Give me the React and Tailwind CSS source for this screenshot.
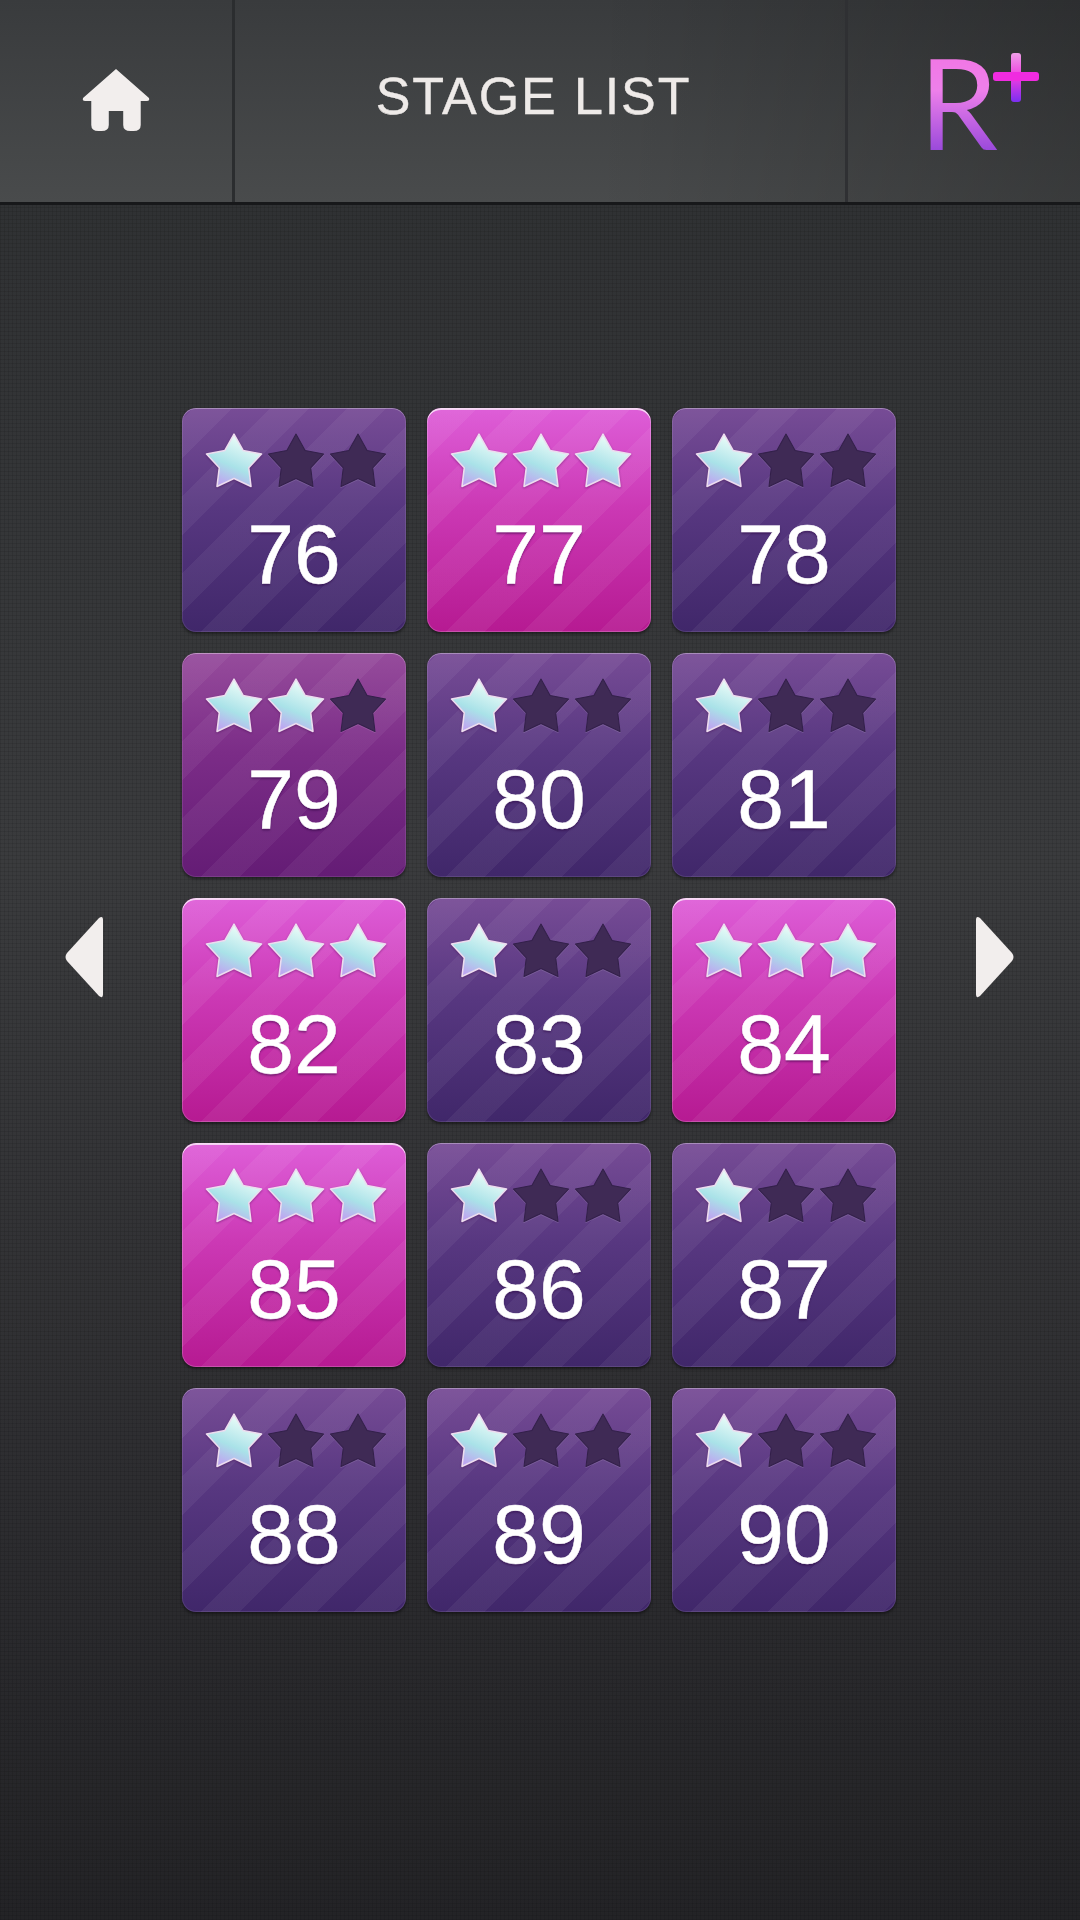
const starPoints = Array.from({ length: 10 }, (_, i) => {
  const r = i % 2 === 0 ? 28 : 15
  const a = (Math.PI / 5) * i - Math.PI / 2
  return `${(30 + r * Math.cos(a)).toFixed(2)},${(31 + r * Math.sin(a)).toFixed(2)}`
}).join(' ')

const tones = {
  dim: 'bg-[image:repeating-linear-gradient(135deg,transparent_0_8px,rgba(255,255,255,.05)_8px_36px,transparent_36px_54.4px),linear-gradient(180deg,#774c96_0%,#573780_45%,#40276a_100%)] shadow-[inset_0_1px_0_rgba(255,255,255,.25),inset_0_0_0_1px_rgba(255,255,255,.1),0_2px_3px_rgba(0,0,0,.45)]',
  mid: 'bg-[image:repeating-linear-gradient(135deg,transparent_0_8px,rgba(255,255,255,.05)_8px_36px,transparent_36px_54.4px),linear-gradient(180deg,#964c9c_0%,#7b2c87_45%,#641c75_100%)] shadow-[inset_0_1px_0_rgba(255,255,255,.3),inset_0_0_0_1px_rgba(255,255,255,.1),0_2px_3px_rgba(0,0,0,.45)]',
  hot: 'bg-[image:repeating-linear-gradient(135deg,transparent_0_8px,rgba(255,255,255,.06)_8px_36px,transparent_36px_54.4px),linear-gradient(180deg,#de5ed8_0%,#cb38b4_45%,#b61a92_100%)] shadow-[inset_0_2px_0_rgba(255,255,255,.7),inset_0_0_0_1px_rgba(255,255,255,.2),0_2px_3px_rgba(0,0,0,.45)]',
}

const stages = [
  [76, 1], [77, 3], [78, 1],
  [79, 2], [80, 1], [81, 1],
  [82, 3], [83, 1], [84, 3],
  [85, 3], [86, 1], [87, 1],
  [88, 1], [89, 1], [90, 1],
]

function Star({ on }) {
  return (
    <svg viewBox="0 0 60 60" className={`w-[62px] h-[62px] ${on ? 'drop-shadow-[0_1px_1px_rgba(60,0,70,.4)]' : 'drop-shadow-[0_1px_0_rgba(255,255,255,.12)]'}`}>
      <defs>
        <linearGradient id="starFill" x1="0.7" y1="0.1" x2="0.3" y2="0.95">
          <stop offset="0" stopColor="#ecfcf8" />
          <stop offset="0.6" stopColor="#a9e2e8" />
          <stop offset="1" stopColor="#bda8f0" />
        </linearGradient>
      </defs>
      {on ? (
        <polygon points={starPoints} fill="url(#starFill)" stroke="#eddcef" strokeWidth="1.5" strokeLinejoin="round" />
      ) : (
        <polygon points={starPoints} fill="#3f2a55" stroke="#33204a" strokeWidth="1" strokeLinejoin="round" />
      )}
    </svg>
  )
}

function Tile({ num, stars }) {
  const tone = stars === 3 ? tones.hot : stars === 2 ? tones.mid : tones.dim
  return (
    <div className={`w-[224px] h-[224px] rounded-[14px] flex flex-col items-center pt-[23px] ${tone}`}>
      <div className="flex pl-[3px]">
        {[0, 1, 2].map(i => <Star key={i} on={i < stars} />)}
      </div>
      <span className="mt-[11px] text-[84px] leading-[100px] text-white [-webkit-text-stroke:0.5px_#ffffff] [text-shadow:0_2px_2px_rgba(40,0,60,.45)]">{num}</span>
    </div>
  )
}

function Arrow({ flip }) {
  return (
    <svg viewBox="0 0 39 82" className={`w-[39px] h-[82px] mb-[106px] ${flip ? '-scale-x-100 ml-[1px]' : ''}`}>
      <path d="M35 2 L3 37 Q0 41 3 45 L35 80 Q39 83 39 78 L39 4 Q39 -1 35 2 Z" fill="#f2eeed" />
    </svg>
  )
}

export default function App() {
  return (
    <div className="w-[1080px] h-[1920px] overflow-hidden font-['Liberation_Sans',sans-serif] bg-[image:repeating-linear-gradient(0deg,rgba(0,0,0,.09)_0_1px,transparent_1px_4px),repeating-linear-gradient(90deg,rgba(0,0,0,.09)_0_1px,transparent_1px_4px),linear-gradient(180deg,#2c2e30_0%,#3a3b3d_45%,#2e2e31_75%,#232326_100%)]">
      <header className="relative h-[205px] flex border-b-[3px] border-[#17181a] bg-[image:linear-gradient(90deg,rgba(0,0,0,0)_0%,rgba(0,0,0,0)_55%,rgba(0,0,0,.22)_100%),linear-gradient(180deg,#393b3d_0%,#494b4c_100%)]">
        <div className="w-[235px] flex items-center justify-center border-r-[3px] border-r-[#2b2d2f] pb-[2px]">
          <svg viewBox="0 0 66 64" preserveAspectRatio="none" className="w-[68px] h-[64px]">
            <path d="M33 1 L65 30 Q66 33 63 33 L57 33 L57 57 Q57 63 50 63 L47 63 Q40 63 40 57 L40 43 L26 43 L26 57 Q26 63 19 63 L16 63 Q9 63 9 57 L9 33 L3 33 Q0 33 1 30 Z" fill="#f2eeed" />
          </svg>
        </div>
        <div className="w-[613px] flex items-center justify-center border-r-[3px] border-r-[#2f3033] pb-[10px] pr-[13px]">
          <h1 className="text-[52px] leading-none font-normal tracking-[1.9px] text-[#eeeae8] [-webkit-text-stroke:0.4px_#eeeae8]">STAGE LIST</h1>
        </div>
        <div className="relative flex-1">
          <span className="absolute left-[71px] top-[42px] text-[126px] leading-[120px] font-['Lato',sans-serif] text-transparent bg-clip-text bg-[image:linear-gradient(180deg,#f272e2_0%,#ee80ea_40%,#8a3fd8_100%)]">R</span>
          <svg viewBox="0 0 46 49" className="absolute left-[145px] top-[53px] w-[46px] h-[49px]">
            <defs>
              <linearGradient id="plusFill" x1="0" y1="0" x2="0" y2="1">
                <stop offset="0" stopColor="#ef9ee8" />
                <stop offset="0.5" stopColor="#ee3be0" />
                <stop offset="1" stopColor="#7a2ff0" />
              </linearGradient>
            </defs>
            <rect x="18" y="0" width="10" height="49" rx="3" fill="url(#plusFill)" />
            <rect x="0" y="19" width="46" height="9" rx="3" fill="#f02be0" />
          </svg>
        </div>
      </header>
      <main className="flex justify-center items-center gap-[79px] pt-[203px] pr-[1px]">
        <Arrow />
        <div className="grid grid-cols-3 gap-[21px]">
          {stages.map(([num, stars]) => <Tile key={num} num={num} stars={stars} />)}
        </div>
        <Arrow flip />
      </main>
    </div>
  )
}
